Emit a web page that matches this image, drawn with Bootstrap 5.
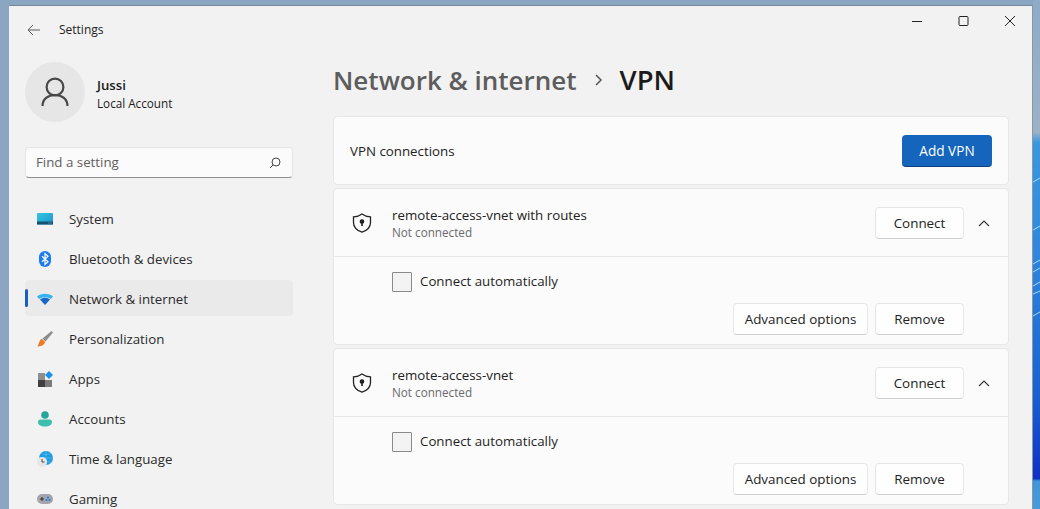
<!doctype html>
<html lang="en"><head><meta charset="utf-8"><title>Settings</title>
<link href="https://cdn.jsdelivr.net/npm/bootstrap@5.3.0/dist/css/bootstrap.min.css" rel="stylesheet">
<style>
html,body{height:509px;overflow:hidden}
body{font-family:"Open Sans","Noto Sans","Liberation Sans",sans-serif;background:#88a3bf;color:#1b1b1b;font-size:14px}
.desk{height:509px;padding-top:5px;padding-left:9px;background:#8aa6c3}
.win{width:1024px;height:504px;flex:none;background:#f2f2f2;border-top:1px solid #78899b;border-right:1px solid #8a98a6;overflow:hidden}
.wall{flex:none;margin-top:-5px;display:block}
.side{width:285px;flex:none;padding-left:16px}
.main{width:738px;flex:none}
.ttl{height:48px;padding-left:2px}
.ttl span{font-size:12px;margin-left:18px;color:#222}
.who{height:60px;margin-top:8px;margin-bottom:25px}
.avatar{width:60px;height:60px;background:#e6e6e6;border-radius:50%;margin-right:12px}
.whotxt{padding-top:4px}
.whotxt b{font-weight:600;font-size:13.2px;line-height:17px;display:block}
.whotxt small{font-size:11.7px;line-height:18px;display:block;color:#1b1b1b}
.find{width:268px;height:31px;background:#fbfbfb;border:1px solid #e5e5e5;border-bottom:1px solid #8e8e8e;border-radius:4px;padding:0 11px 0 10px;color:#5f5f5f;font-size:13.3px}
.menu{margin-top:22px;width:268px}
.mitem{height:36px;margin-bottom:4px;padding:3px 0 0 12px;color:#2b2b2b;font-size:13.3px;border-radius:4px;position:relative}
.mitem svg{width:16px;height:16px;margin-right:16px;flex:none;margin-top:-2px}
.mitem.on{background:#eaeaea}
.mitem.on::before{content:"";position:absolute;left:0;top:9px;width:3px;height:18px;background:#1a5fc0;border-radius:2px}
.winbtns{height:30px;padding-right:13px;gap:28px}
.head{margin:20px 0 0 39px;height:48px;font-size:26px;font-weight:600;line-height:48px}
.head .p{color:#5d5d5d}
.head .c{color:#1b1b1b;font-size:27.4px}
.head svg{margin:0 17px}
.wrap{margin-left:39px;width:676px;margin-top:12px}
.panel{background:#fbfbfb;border:1px solid #e7e7e7;border-radius:5px;margin-bottom:3px}
.rowtop{height:69px;padding:1px 16px 0}
.btnp{background:#1565bc;color:#fff;border:0;border-bottom:1px solid #0d3f7c;border-radius:4px;width:90px;height:32px;font-size:13.6px;padding:1px 0 0}
.btnw{background:#fefefe;color:#222;border:1px solid #e7e7e7;border-bottom:1px solid #cfcfcf;border-radius:4px;height:32px;font-size:13.4px;padding:1px 0 0;width:89px}
.btnw.wide{width:135px}
.rowhd{height:68px;padding:0 16px 0 18px;border-bottom:1px solid #e8e8e8}
.rowhd svg.sh{width:20px;height:20px;margin-right:20px}
.rowtxt{padding-top:2px}
.nm{font-size:13.3px;line-height:18px;color:#222}
.st{font-size:11.7px;line-height:17px;color:#6a6a6a}
.chev{margin-left:14px;margin-right:2px}
.rowbd{padding:15px 44px 0 58px;height:87px}
.box{width:20px;height:20px;background:#f3f3f3;border:1px solid #8a8a8a;margin-right:8px;border-radius:1px}
.lbl{font-size:13.3px;color:#1f1f1f}
.acts{margin-top:11px;gap:7px;justify-content:flex-end}
</style></head><body>
<div class="desk d-flex"><div class="win d-flex">
<div class="side">
<div class="ttl d-flex align-items-center">
<svg width="14" height="12" viewBox="0 0 14 12" fill="none" stroke="#5a5a5a" stroke-width="1"><path d="M13 6H1M6 1 1 6l5 5"/></svg>
<span>Settings</span></div>
<div class="who d-flex align-items-center">
<div class="avatar d-flex align-items-center justify-content-center"><svg width="28" height="32" viewBox="0 0 28 32" fill="none" stroke="#474747" stroke-width="2.2"><circle cx="14" cy="11" r="8.4"/><path d="M1.500 30c0-7 5.500-11 12.500-11s12.500 4 12.500 11"/></svg></div>
<div class="whotxt"><b>Jussi</b><small>Local Account</small></div></div>
<div class="find d-flex align-items-center justify-content-between"><span>Find a setting</span>
<svg width="12" height="12" viewBox="0 0 12 12" fill="none" stroke="#444" stroke-width="1"><circle cx="7" cy="5" r="4"/><path d="M4 8 1 11"/></svg></div>
<div class="menu">
<div class="mitem d-flex align-items-center"><svg viewBox="0 0 16 16"><defs><linearGradient id="g1" x1="0" y1="0" x2="1" y2="1"><stop offset="0" stop-color="#36c6dc"/><stop offset="1" stop-color="#1e94d6"/></linearGradient></defs><rect y="2" width="16" height="11.500" rx="1" fill="url(#g1)"/><rect y="10.500" width="16" height="3" fill="#15506f"/><path d="M11.500 12h1M13.500 12h1" stroke="#9fd0e8" stroke-width=".8"/></svg>System</div>
<div class="mitem d-flex align-items-center"><svg viewBox="0 0 16 16"><rect x="2" y="0" width="12" height="16" rx="6" fill="#1a7cf0"/><path d="M5 5.200l6 5.600L8 13.500V2.500l3 2.700-6 5.600" fill="none" stroke="#fff" stroke-width="1.200"/></svg>Bluetooth &amp; devices</div>
<div class="mitem on d-flex align-items-center"><svg viewBox="0 0 16 16"><path d="M0 5.500C4 1.800 12 1.800 16 5.500L13.800 8C10.500 5.500 5.500 5.500 2.200 8Z" fill="#35b2f0"/><path d="M3 8.500C6 6.300 10 6.300 13 8.500L8 14Z" fill="#1667c9"/></svg>Network &amp; internet</div>
<div class="mitem d-flex align-items-center"><svg viewBox="0 0 16 16"><path d="M14.500 0 16 1.500 8.500 10.500 5.500 7.500Z" fill="#8d8d8d"/><path d="M5 7.800 8.200 11c-1 3-4 4.500-8 4.500 2-1.500 1.500-6.500 4.800-7.700Z" fill="#ee7a22"/></svg>Personalization</div>
<div class="mitem d-flex align-items-center"><svg viewBox="0 0 16 16"><rect x="1" y="2" width="7" height="7" fill="#8f8f8f"/><rect x="1" y="9" width="7" height="7" fill="#404040"/><rect x="8" y="9" width="7" height="7" fill="#7b7b7b"/><path d="M12 0l4 4-4 4-4-4Z" fill="#1c8fe8"/></svg>Apps</div>
<div class="mitem d-flex align-items-center"><svg viewBox="0 0 16 16"><circle cx="8" cy="4" r="3.800" fill="#26a69a"/><path d="M1 11a2.500 2.500 0 0 1 2.500-2.500h9A2.500 2.500 0 0 1 15 11c0 3-3 4.500-7 4.500S1 14 1 11Z" fill="#3cc0ab"/></svg>Accounts</div>
<div class="mitem d-flex align-items-center"><svg viewBox="0 0 16 16"><circle cx="9" cy="7" r="7" fill="#1f9be0"/><path d="M9 0v14M2 7h14M4 2.500c3 1.500 7 1.500 10 0M4 11.500c3-1.500 7-1.500 10 0" stroke="#7ccbf2" stroke-width=".5" fill="none"/><circle cx="5" cy="11" r="5" fill="#e6e6e6"/><path d="M5 8v3h2.500" fill="none" stroke="#444" stroke-width="1"/></svg>Time &amp; language</div>
<div class="mitem d-flex align-items-center"><svg viewBox="0 0 16 16"><rect y="3" width="16" height="10" rx="5" fill="#a4a4ac"/><path d="M3 8h4M5 6v4" stroke="#333" stroke-width="1"/><circle cx="11" cy="6.500" r="1.100" fill="#1c7fe0"/><circle cx="9.500" cy="9" r="1.100" fill="#1c7fe0"/><circle cx="12.500" cy="9" r="1.100" fill="#1c7fe0"/></svg>Gaming</div>
</div></div>
<div class="main">
<div class="winbtns d-flex justify-content-end align-items-center">
<svg width="18" height="12" viewBox="0 0 18 12" stroke="#222" fill="none"><path d="M3 6.500h10"/></svg>
<svg width="18" height="12" viewBox="0 0 18 12" stroke="#222" fill="none"><rect x="4" y="1.500" width="9" height="9" rx="1"/></svg>
<svg width="18" height="12" viewBox="0 0 18 12" stroke="#222" fill="none"><path d="M4 1l10 10M14 1 4 11"/></svg>
</div>
<div class="head d-flex align-items-center"><span class="p">Network &amp; internet</span><svg width="9" height="12" viewBox="0 0 9 12" fill="none" stroke="#555" stroke-width="1.500"><path d="M2 1l5 5-5 5"/></svg><span class="c">VPN</span></div>
<div class="wrap">
<div class="panel rowtop d-flex align-items-center justify-content-between"><span class="nm">VPN connections</span><button class="btn btnp">Add VPN</button></div>
<div class="panel">
<div class="rowhd d-flex align-items-center"><svg class="sh" viewBox="0 0 20 20" fill="none" stroke="#222" stroke-width="1.300"><path d="M10 1C12.300 2.800 15.300 3.700 18.500 3.800V9.500c0 4.500-3.500 8-8.500 9.700C5 17.500 1.500 14 1.500 9.500V3.800C4.700 3.700 7.700 2.800 10 1Z"/><circle cx="10" cy="8.500" r="1.700" fill="#222"/><path d="M10 9v4" stroke-width="1.600"/></svg><div class="flex-grow-1 rowtxt"><div class="nm">remote-access-vnet with routes</div><div class="st">Not connected</div></div><button class="btn btnw">Connect</button><svg class="chev" width="12" height="8" viewBox="0 0 12 8" fill="none" stroke="#333" stroke-width="1.100"><path d="M1 7l5-5 5 5"/></svg></div>
<div class="rowbd"><div class="d-flex align-items-center"><div class="box"></div><span class="lbl">Connect automatically</span></div><div class="acts d-flex"><button class="btn btnw wide">Advanced options</button><button class="btn btnw">Remove</button></div></div>
</div>
<div class="panel">
<div class="rowhd d-flex align-items-center"><svg class="sh" viewBox="0 0 20 20" fill="none" stroke="#222" stroke-width="1.300"><path d="M10 1C12.300 2.800 15.300 3.700 18.500 3.800V9.500c0 4.500-3.500 8-8.500 9.700C5 17.500 1.500 14 1.500 9.500V3.800C4.700 3.700 7.700 2.800 10 1Z"/><circle cx="10" cy="8.500" r="1.700" fill="#222"/><path d="M10 9v4" stroke-width="1.600"/></svg><div class="flex-grow-1 rowtxt"><div class="nm">remote-access-vnet</div><div class="st">Not connected</div></div><button class="btn btnw">Connect</button><svg class="chev" width="12" height="8" viewBox="0 0 12 8" fill="none" stroke="#333" stroke-width="1.100"><path d="M1 7l5-5 5 5"/></svg></div>
<div class="rowbd"><div class="d-flex align-items-center"><div class="box"></div><span class="lbl">Connect automatically</span></div><div class="acts d-flex"><button class="btn btnw wide">Advanced options</button><button class="btn btnw">Remove</button></div></div>
</div>
</div></div>
</div>
<svg class="wall" width="7" height="509" viewBox="0 0 7 509"><defs><linearGradient id="w" x1="0" y1="0" x2="0" y2="1"><stop offset="0" stop-color="#8eabc8"/><stop offset=".26" stop-color="#9db1c6"/><stop offset=".28" stop-color="#3b98de"/><stop offset=".5" stop-color="#2f86dc"/><stop offset=".78" stop-color="#1a5fd0"/><stop offset=".94" stop-color="#1030c0"/><stop offset=".945" stop-color="#3f95d8"/><stop offset="1" stop-color="#4a9ad8"/></linearGradient></defs><rect width="7" height="509" fill="url(#w)"/><path d="M0 182 7 178M0 230 7 226M0 264 7 260M0 272 7 268M0 286 7 282M0 294 7 291M0 316 7 312" stroke="#a8dcf5" stroke-width="1"/></svg>
</div>
<script src="https://cdn.jsdelivr.net/npm/bootstrap@5.3.0/dist/js/bootstrap.bundle.min.js"></script>
</body></html>
